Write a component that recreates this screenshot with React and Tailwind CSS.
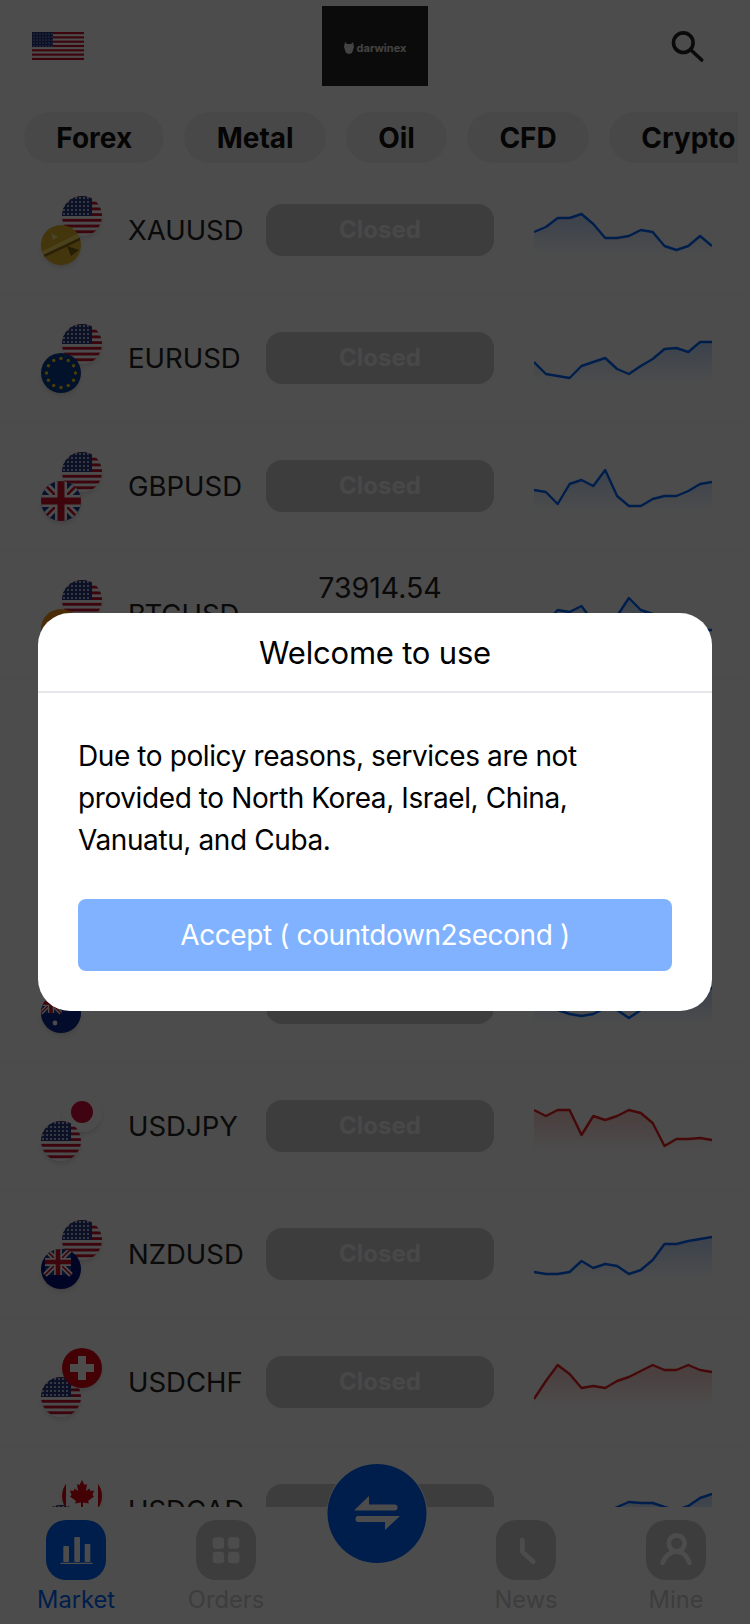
import React from 'react';

const font = { fontFamily: 'Inter, "Liberation Sans", sans-serif' };

const rows = [
    { symbol: 'XAUUSD', top: 'us', bottom: 'gold', pts: [28, 23, 14, 14, 10, 20, 34, 34, 32, 26, 28, 42, 46, 42, 32, 42] },
    { symbol: 'EURUSD', top: 'us', bottom: 'eu', pts: [30, 42, 44, 46, 34, 30, 26, 37, 42, 34, 27, 17, 16, 20, 10, 10] },
    { symbol: 'GBPUSD', top: 'us', bottom: 'gb', pts: [30, 32, 44, 24, 20, 26, 10, 36, 46, 46, 39, 36, 36, 31, 24, 22] },
    { symbol: 'BTCUSD', top: 'us', bottom: 'btc', price: '73914.54', pts: [40, 35, 22, 24, 18, 34, 36, 28, 10, 22, 26, 36, 38, 40, 42, 42] },
    { spacer: true, symbol: 'a' },
    { spacer: true, symbol: 'b' },
    { symbol: 'AUDUSD', top: 'us', bottom: 'au', pts: [20, 30, 38, 42, 44, 42, 36, 38, 46, 38, 30, 26, 22, 20, 18, 16] },
    { symbol: 'USDJPY', top: 'jp', bottom: 'us', red: true, pts: [10, 16, 10, 10, 35, 16, 20, 16, 10, 13, 23, 46, 39, 39, 38, 40] },
    { symbol: 'NZDUSD', top: 'us', bottom: 'nz', pts: [44, 46, 46, 44, 33, 40, 36, 38, 46, 42, 32, 16, 16, 13, 11, 9] },
    { symbol: 'USDCHF', top: 'ch', bottom: 'us', red: true, frontTop: true, pts: [43, 25, 9, 18, 32, 30, 32, 25, 21, 15, 9, 14, 14, 9, 14, 16] },
    { symbol: 'USDCAD', top: 'ca', bottom: 'us', pts: [36, 38, 40, 38, 34, 30, 30, 23, 18, 19, 19, 23, 26, 22, 14, 10] },
];

const UsArt = () => (
    <>
        <rect width="40" height="40" fill="#fff" />
        {[0, 1, 2, 3, 4, 5, 6].map((i) => (
            <rect key={i} y={i * 5.72} width="40" height="2.86" fill="#c8102e" />
        ))}
        <rect width="30" height="20" fill="#2b3a86" />
        {[2, 6, 10, 14, 18].map((y) =>
            [2, 6, 10, 14, 18, 22, 26].map((x) => <circle key={x + '-' + y} cx={x} cy={y} r="0.9" fill="#fff" />)
        )}
    </>
);

const UnionArt = ({ size = 40 }) => (
    <g transform={`scale(${size / 40})`}>
        <rect width="40" height="40" fill="#1c3f94" />
        <path d="M0 0 40 40M40 0 0 40" stroke="#fff" strokeWidth="8" />
        <path d="M0 0 40 40M40 0 0 40" stroke="#cf142b" strokeWidth="2.6" />
        <path d="M20 0V40M0 20H40" stroke="#fff" strokeWidth="12" />
        <path d="M20 0V40M0 20H40" stroke="#cf142b" strokeWidth="7" />
    </g>
);

const Flag = ({ code }) => (
    <svg viewBox="0 0 40 40" className="w-10 h-10 rounded-full">
        {code === 'us' && <UsArt />}
        {code === 'gold' && (
            <>
                <rect width="40" height="40" fill="#e0b42c" />
                <path d="M0 27 40 7V15L0 34Z" fill="#f6dc62" />
                <path d="M0 31 40 12V15L0 34Z" fill="#8f6c12" />
                <path d="M26 21 38 25 30 31Z" fill="#7d6414" />
                <path d="M10 8 17 12 12 15Z" fill="#f3e08c" />
            </>
        )}
        {code === 'eu' && (
            <>
                <rect width="40" height="40" fill="#0a3d91" />
                {[0, 1, 2, 3, 4, 5, 6, 7, 8, 9, 10, 11].map((i) => (
                    <circle
                        key={i}
                        cx={20 + 14.5 * Math.cos((i * Math.PI) / 6)}
                        cy={20 + 14.5 * Math.sin((i * Math.PI) / 6)}
                        r="1.7"
                        fill="#f7d117"
                    />
                ))}
            </>
        )}
        {code === 'gb' && <UnionArt />}
        {code === 'btc' && <rect width="40" height="40" fill="#f7931a" />}
        {code === 'au' && (
            <>
                <rect width="40" height="40" fill="#0a2a8c" />
                <UnionArt size={20} />
                <circle cx="14" cy="30" r="2.4" fill="#fff" />
            </>
        )}
        {code === 'nz' && (
            <>
                <rect width="40" height="40" fill="#00137f" />
                <g transform="translate(4 0)">
                    <UnionArt size={26} />
                </g>
            </>
        )}
        {code === 'jp' && (
            <>
                <rect width="40" height="40" fill="#fff" />
                <circle cx="20" cy="20" r="11" fill="#d30b3f" />
            </>
        )}
        {code === 'ch' && (
            <>
                <rect width="40" height="40" fill="#e30613" />
                <path d="M16 8H24V16H32V24H24V32H16V24H8V16H16Z" fill="#fff" />
            </>
        )}
        {code === 'ca' && (
            <>
                <rect width="40" height="40" fill="#fff" />
                <rect width="4" height="40" fill="#e30613" />
                <rect x="36" width="4" height="40" fill="#e30613" />
                <path
                    d="M20 4 22.5 9 25 8 24 15 27.5 12.5 28.5 15 32 14.5 30.5 19 32 20.5 26 25 27 27.5 21 26.5V34H19V26.5L13 27.5 14 25 8 20.5 9.5 19 8 14.5 11.5 15 12.5 12.5 16 15 15 8 17.5 9Z"
                    fill="#e30613"
                />
            </>
        )}
    </svg>
);

const Spark = ({ pts, red, id }) => {
    const color = red ? '#e82020' : '#0066ff';
    const step = 178 / 15;
    const line = pts.map((y, i) => `${(i * step).toFixed(1)},${y}`).join(' L');
    return (
        <svg viewBox="0 0 178 52" className="w-[178px] h-[52px] shrink-0">
            <defs>
                <linearGradient id={id} x1="0" y1="0" x2="0" y2="1">
                    <stop offset="0" stopColor={color} stopOpacity="0.22" />
                    <stop offset="1" stopColor={color} stopOpacity="0" />
                </linearGradient>
            </defs>
            <path d={`M${line} L178,52 L0,52 Z`} fill={`url(#${id})`} />
            <path d={`M${line}`} fill="none" stroke={color} strokeWidth="2.4" strokeLinejoin="round" />
        </svg>
    );
};

const Row = ({ row }) => {
    if (row.spacer) return <div className="h-[128px] shrink-0" />;
    return (
        <div className="flex items-center h-[128px] shrink-0 pl-[41px] shadow-[0_3px_3px_rgba(0,0,0,0.025)]">
            <div className="relative w-[61px] h-[69px] shrink-0">
                <div className={`absolute left-[21px] top-0 rounded-full shadow-md ${row.frontTop ? 'z-10' : ''}`}>
                    <Flag code={row.top} />
                </div>
                <div className="absolute left-0 top-[29px] rounded-full shadow-md">
                    <Flag code={row.bottom} />
                </div>
            </div>
            <div className="w-[164px] pl-[26px] pt-[2px] shrink-0 text-[27.5px] text-[#222]">{row.symbol}</div>
            {row.price ? (
                <div className="w-[228px] shrink-0 flex justify-center pb-[52px] text-[28.5px] text-[#222]">{row.price}</div>
            ) : (
                <div className="w-[228px] h-[52px] shrink-0 rounded-[16px] bg-[#cccccc] flex items-center justify-center text-[24px] font-bold text-[#f2f2f2]">
                    Closed
                </div>
            )}
            <div className="ml-10">
                <Spark pts={row.pts} red={row.red} id={'spark-' + row.symbol} />
            </div>
        </div>
    );
};

const MarketIcon = () => (
    <svg viewBox="0 0 60 60" className="w-[60px] h-[60px]" fill="#fff">
        <rect x="17.3" y="26" width="5.7" height="16" rx="1" />
        <rect x="28.3" y="17" width="5.7" height="25" rx="1" />
        <rect x="38.7" y="24" width="5.6" height="18" rx="1" />
        <rect x="14.3" y="42.7" width="32.4" height="1.2" rx="0.6" />
    </svg>
);

const OrdersIcon = () => (
    <svg viewBox="0 0 60 60" className="w-[60px] h-[60px]" fill="#fff">
        <rect x="16.7" y="17.3" width="11.4" height="11.4" rx="3" />
        <rect x="32" y="17.3" width="11.4" height="11.4" rx="3" />
        <rect x="16.7" y="31.7" width="11.4" height="11.6" rx="3" />
        <rect x="32" y="31.7" width="11.4" height="11.6" rx="3" />
    </svg>
);

const NewsIcon = () => (
    <svg viewBox="0 0 60 60" className="w-[60px] h-[60px]" fill="none" stroke="#fff" strokeWidth="4.7" strokeLinecap="round" strokeLinejoin="round">
        <path d="M26.3 20V31.7L37.3 41.7" />
    </svg>
);

const MineIcon = () => (
    <svg viewBox="0 0 60 60" className="w-[60px] h-[60px]" fill="none" stroke="#fff" strokeWidth="4.7" strokeLinecap="round">
        <circle cx="30.7" cy="23.3" r="8" />
        <path d="M16.7 42.7C19 35.5 25 31.6 30.7 31.6S41 35.5 43.3 42.7" />
    </svg>
);

const NavItem = ({ label, icon, active }) => (
    <div className="flex flex-col items-center pt-[13px]">
        <div className={`w-[60px] h-[60px] rounded-[20px] ${active ? 'bg-[#0066ff]' : 'bg-[#cccccc]'}`}>{icon}</div>
        <span className={`mt-[4px] text-[23.7px] leading-[32px] ${active ? 'text-[#0066ff]' : 'text-[#cccccc]'}`}>{label}</span>
    </div>
);

const App = () => {
    return (
        <div className="relative w-[750px] h-[1624px] overflow-hidden bg-white flex flex-col" style={font}>
            <div className="grid grid-cols-3 items-center h-[92px] shrink-0 px-8">
                <svg viewBox="0 0 52 28" className="w-[52px] h-[28px]">
                    <rect width="52" height="28" fill="#fff" />
                    {[0, 1, 2, 3, 4, 5, 6].map((i) => (
                        <rect key={i} y={i * 4.31} width="52" height="2.15" fill="#c8102e" />
                    ))}
                    <rect width="21" height="15" fill="#2b3a86" />
                    {[2, 5, 8, 11, 14].map((y) =>
                        [2, 5, 8, 11, 14, 17, 20].map((x) => <circle key={x + '-' + y} cx={x} cy={y} r="0.6" fill="#fff" />)
                    )}
                </svg>
                <div className="justify-self-center w-[106px] h-[80px] bg-[#252525] flex items-center justify-center pt-[4px] gap-[3px]">
                    <svg viewBox="0 0 10 12" className="w-[10px] h-[12px]" fill="#e0e0e0">
                        <path d="M1 0 3 2H7L9 0 10 5 8 11 5 12 2 11 0 5Z" />
                    </svg>
                    <span className="text-[11px] font-bold text-[#e0e0e0]">darwinex</span>
                </div>
                <div className="justify-self-end w-[60px] h-[60px] rounded-[16px] bg-[#fdfdfd] shadow-[0_0_8px_rgba(0,0,0,0.015)]">
                    <svg viewBox="0 0 60 60" className="w-[60px] h-[60px]" fill="none" stroke="#222" strokeWidth="3.6" strokeLinecap="round">
                        <circle cx="25.3" cy="26.7" r="9.8" />
                        <path d="M33 34 43.7 44" />
                    </svg>
                </div>
            </div>

            <div className="flex gap-5 ml-6 mr-3 mt-5 h-[51px] shrink-0 overflow-hidden">
                {['Forex', 'Metal', 'Oil', 'CFD', 'Crypto'].map((t) => (
                    <div key={t} className="shrink-0 px-[32.25px] rounded-full bg-[#f2f2f2] flex items-center text-[28px] font-bold text-[#111]">
                        {t}
                    </div>
                ))}
            </div>

            <div className="flex-1 min-h-0 mt-[3px] overflow-hidden flex flex-col">
                {rows.map((row) => (
                    <Row key={row.symbol} row={row} />
                ))}
            </div>

            <div className="relative h-[117px] shrink-0 bg-white">
                <div className="grid grid-cols-5 w-[750px] ml-px">
                    <NavItem label="Market" icon={<MarketIcon />} active />
                    <NavItem label="Orders" icon={<OrdersIcon />} />
                    <div className="relative">
                        <div className="absolute left-1/2 -translate-x-1/2 -top-[43px] ml-px w-[99px] h-[99px] rounded-full bg-[#0066ff] shadow-[0_0_0_1px_rgba(255,255,255,0.9)]">
                            <svg viewBox="0 0 99 99" className="w-[99px] h-[99px]" fill="#fff">
                                <path d="M27 46 41.5 32V40.5H67A3 3 0 0 1 67 46.5H27Z" />
                                <path d="M31 52H72.5L57.5 66V58H31A3 3 0 0 1 31 52Z" />
                            </svg>
                        </div>
                    </div>
                    <NavItem label="News" icon={<NewsIcon />} />
                    <NavItem label="Mine" icon={<MineIcon />} />
                </div>
            </div>

            <div className="absolute inset-0 z-20 bg-black/70 flex items-center justify-center">
                <div className="w-[674px] rounded-[32px] bg-white overflow-hidden">
                    <div className="h-[78px] pt-[3px] flex items-center justify-center text-[31px] tracking-[-0.2px] text-black">Welcome to use</div>
                    <div className="h-[2px] bg-[#e5e5ea]" />
                    <div className="px-10 pt-[42px] pb-10">
                        <p className="text-[28px] leading-[42px] tracking-[-0.4px] text-black">
                            Due to policy reasons, services are not provided to North Korea, Israel, China, Vanuatu, and Cuba.
                        </p>
                        <div className="mt-[38px] h-[72px] rounded-[8px] bg-[#80b2ff] flex items-center justify-center text-[28px] tracking-[-0.4px] text-white">
                            Accept ( countdown2second )
                        </div>
                    </div>
                </div>
            </div>
        </div>
    );
};

export default App;
